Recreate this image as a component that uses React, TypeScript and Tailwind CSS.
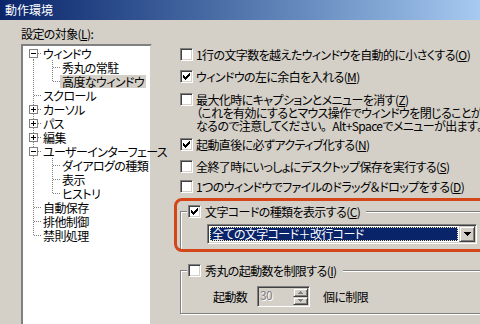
import React from "react";

const sunken =
  "border border-t-[#808080] border-l-[#808080] border-b-white border-r-white shadow-[inset_1px_1px_0_#404040,inset_-1px_-1px_0_#d4d0c8]";
const raised =
  "bg-[#d4d0c8] border border-t-[#d4d0c8] border-l-[#d4d0c8] border-b-[#404040] border-r-[#404040] shadow-[inset_1px_1px_0_#fff,inset_-1px_-1px_0_#808080]";

function Key({ k }: { k: string }) {
  return (
    <>
      (<span className="underline underline-offset-1">{k}</span>)
    </>
  );
}

function Check({ on }: { on?: boolean }) {
  return (
    <span className={`block w-[13px] h-[13px] shrink-0 bg-white ${sunken}`}>
      {on && (
        <svg width="11" height="11" className="block" shapeRendering="crispEdges">
          {[
            [2, 4],
            [3, 5],
            [4, 6],
            [5, 5],
            [6, 4],
            [7, 3],
            [8, 2],
          ].map(([x, y]) => (
            <rect key={x} x={x} y={y} width="1" height="3" fill="#000" />
          ))}
        </svg>
      )}
    </span>
  );
}

type Row = {
  label: string;
  level: 0 | 1;
  exp?: "-" | "+";
  last?: boolean;
  selected?: boolean;
};

const tree: Row[] = [
  { label: "ウィンドウ", level: 0, exp: "-" },
  { label: "秀丸の常駐", level: 1 },
  { label: "高度なウィンドウ", level: 1, last: true, selected: true },
  { label: "スクロール", level: 0 },
  { label: "カーソル", level: 0, exp: "+" },
  { label: "パス", level: 0, exp: "+" },
  { label: "編集", level: 0, exp: "+" },
  { label: "ユーザーインターフェース", level: 0, exp: "-" },
  { label: "ダイアログの種類", level: 1 },
  { label: "表示", level: 1 },
  { label: "ヒストリ", level: 1, last: true },
  { label: "自動保存", level: 0 },
  { label: "排他制御", level: 0 },
  { label: "禁則処理", level: 0, last: true },
];

function Gutter({ row, first }: { row: Row; first: boolean }) {
  const w = row.level === 0 ? 18 : 37;
  const dot = { stroke: "#808080", strokeDasharray: "1 1" };
  return (
    <svg width={w} height="14" className="block shrink-0" shapeRendering="crispEdges">
      {row.level === 0 ? (
        <>
          <line x1="10.5" x2="10.5" y1={first ? 7 : 0} y2={row.last ? 8 : 14} {...dot} />
          <line x1="11" x2="18" y1="7.5" y2="7.5" {...dot} />
          {row.exp && (
            <>
              <rect x="6.5" y="3.5" width="8" height="8" fill="#fff" stroke="#808080" />
              <line x1="8" x2="13" y1="7.5" y2="7.5" stroke="#000" />
              {row.exp === "+" && <line x1="10.5" x2="10.5" y1="5" y2="10" stroke="#000" />}
            </>
          )}
        </>
      ) : (
        <>
          <line x1="10.5" x2="10.5" y1="0" y2="14" {...dot} />
          <line x1="29.5" x2="29.5" y1="0" y2={row.last ? 8 : 14} {...dot} />
          <line x1="30" x2="37" y1="7.5" y2="7.5" {...dot} />
        </>
      )}
    </svg>
  );
}

function CheckRow({ on, children }: { on?: boolean; children: React.ReactNode }) {
  return (
    <div className="flex items-start gap-[3px]">
      <Check on={on} />
      <div className="leading-[13px] whitespace-nowrap">{children}</div>
    </div>
  );
}

function Tri({ color, big }: { color: string; big?: boolean }) {
  const rows = big ? [7, 5, 3, 1] : [5, 3, 1];
  const w = rows[0];
  return (
    <svg width={w} height={rows.length} className="block" shapeRendering="crispEdges">
      {rows.map((n, i) => (
        <rect key={i} x={(w - n) / 2} y={i} width={n} height="1" fill={color} />
      ))}
    </svg>
  );
}

export default function App() {
  return (
    <div className="relative w-[480px] h-[324px] overflow-hidden bg-[#d4d0c8] text-[12px] tracking-[-0.6px] text-black font-['Noto_Sans_CJK_JP',sans-serif] [font-feature-settings:'palt']">
      {/* caption */}
      <div className="h-[20px] bg-linear-to-r from-[#0a246a] to-[#a6caf0] pl-[5px] leading-[20px] text-white tracking-normal">
        動作環境
      </div>

      <div className="flex">
        {/* left: tree */}
        <div className="w-[152px] shrink-0 pl-[21px] pt-[7px]">
          <div className="leading-[14px] whitespace-nowrap">
            設定の対象<Key k="L" />:
          </div>
          <div className="mt-[3px] h-[300px] w-[131px] bg-white border-2 border-t-[#808080] border-l-[#808080] border-b-white border-r-[#d4d0c8]">
            {tree.map((r, i) => (
              <div key={r.label} className="flex h-[14px] items-center">
                <Gutter row={r} first={i === 0} />
                <span
                  className={`px-[2px] leading-[13px] whitespace-nowrap ${r.selected ? "bg-[#d4d0c8]" : ""}`}
                >
                  {r.label}
                </span>
              </div>
            ))}
          </div>
        </div>

        {/* right: options */}
        <div className="ml-[28px] w-[320px] shrink-0 pt-[28px] flex flex-col">
          <CheckRow>
            1行の文字数を越えたウィンドウを自動的に小さくする<Key k="O" />
          </CheckRow>
          <div className="mt-[9px]">
            <CheckRow on>
              ウィンドウの左に余白を入れる<Key k="M" />
            </CheckRow>
          </div>
          <div className="mt-[10px]">
            <CheckRow>
              最大化時にキャプションとメニューを消す<Key k="Z" />
              <br />
              （これを有効にするとマウス操作でウィンドウを閉じることができなく
              <br />
              なるので注意してください<span className="[font-feature-settings:normal]">。</span>
              Alt+Spaceでメニューが出ます<span className="[font-feature-settings:normal]">。</span>）
            </CheckRow>
          </div>
          <div className="mt-[6px]">
            <CheckRow on>
              起動直後に必ずアクティブ化する<Key k="N" />
            </CheckRow>
          </div>
          <div className="mt-[9px]">
            <CheckRow>
              全終了時にいっしょにデスクトップ保存を実行する<Key k="S" />
            </CheckRow>
          </div>
          <div className="mt-[7px]">
            <CheckRow>
              1つのウィンドウでファイルのドラッグ＆ドロップをする<Key k="D" />
            </CheckRow>
          </div>

          {/* group: character code */}
          <fieldset className="mt-[12px] w-[320px] border border-[#808080] pl-[6px] pb-[5px] shadow-[inset_1px_1px_0_#fff,1px_1px_0_#fff]">
            <legend className="flex items-center gap-[4px] bg-[#d4d0c8] pl-[1px] pr-[6px]">
              <Check on />
              <span className="leading-[13px] whitespace-nowrap">
                文字コードの種類を表示する<Key k="C" />
              </span>
            </legend>
            <div className={`ml-[20px] mt-[6px] flex h-[20px] w-[270px] bg-white p-[1px] ${sunken}`}>
              <div className="flex-1 min-w-0 p-[1px]">
                <div className="h-full border border-dotted border-[#f0e8a8] bg-[#0a246a] pl-[1px] leading-[12px] text-white whitespace-nowrap">
                  全ての文字コード＋改行コード
                </div>
              </div>
              <div className={`flex h-full w-[16px] shrink-0 items-center justify-center ${raised}`}>
                <Tri color="#000" big />
              </div>
            </div>
          </fieldset>

          {/* group: instance limit */}
          <fieldset className="mt-[14px] w-[320px] border border-[#808080] pl-[6px] pb-[6px] shadow-[inset_1px_1px_0_#fff,1px_1px_0_#fff]">
            <legend className="flex items-center gap-[4px] bg-[#d4d0c8] pl-[1px] pr-[6px]">
              <Check />
              <span className="leading-[13px] whitespace-nowrap">
                秀丸の起動数を制限する<Key k="I" />
              </span>
            </legend>
            <div className="ml-[26px] mt-[9px] flex h-[21px] items-center">
              <span className="w-[44px] leading-[13px]">起動数</span>
              <div className={`flex h-[21px] w-[53px] bg-[#d4d0c8] p-[1px] ${sunken}`}>
                <div className="flex-1 pl-[1px] leading-[14px] text-[#808080] [text-shadow:1px_1px_0_#fff]">30</div>
                <div className="flex w-[15px] flex-col">
                  <div className={`flex flex-1 items-center justify-center ${raised}`}>
                    <svg width="5" height="3" className="block rotate-180" shapeRendering="crispEdges">
                      <rect x="0" y="0" width="5" height="1" fill="#808080" />
                      <rect x="1" y="1" width="3" height="1" fill="#808080" />
                      <rect x="2" y="2" width="1" height="1" fill="#808080" />
                    </svg>
                  </div>
                  <div className={`flex flex-1 items-center justify-center ${raised}`}>
                    <Tri color="#808080" />
                  </div>
                </div>
              </div>
              <span className="ml-[13px] leading-[13px]">個に制限</span>
            </div>
          </fieldset>
        </div>
      </div>

      {/* annotation highlight */}
      <div className="absolute left-[174px] top-[198px] h-[54px] w-[320px] rounded-[8px] border-[3px] border-[#d4461a]" />
    </div>
  );
}
